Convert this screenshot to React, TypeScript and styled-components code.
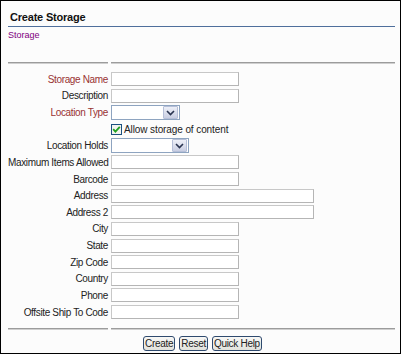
import React from 'react';
import styled, { createGlobalStyle } from 'styled-components';

const GlobalStyle = createGlobalStyle`
  html, body {
    margin: 0;
    padding: 0;
    background: #ffffff;
  }
`;

interface Field {
  label: string;
  kind: 'text' | 'wide' | 'select' | 'check';
  required?: boolean;
  selectWidth?: number;
}

const fields: Field[] = [
  { label: 'Storage Name', kind: 'text', required: true },
  { label: 'Description', kind: 'text' },
  { label: 'Location Type', kind: 'select', required: true, selectWidth: 69 },
  { label: '', kind: 'check' },
  { label: 'Location Holds', kind: 'select', selectWidth: 78 },
  { label: 'Maximum Items Allowed', kind: 'text' },
  { label: 'Barcode', kind: 'text' },
  { label: 'Address', kind: 'wide' },
  { label: 'Address 2', kind: 'wide' },
  { label: 'City', kind: 'text' },
  { label: 'State', kind: 'text' },
  { label: 'Zip Code', kind: 'text' },
  { label: 'Country', kind: 'text' },
  { label: 'Phone', kind: 'text' },
  { label: 'Offsite Ship To Code', kind: 'text' },
];

const App: React.FC = () => {
  return (
    <>
      <GlobalStyle />
      <Frame>
        <Title>Create Storage</Title>
        <Crumb>Storage</Crumb>
        <Separator $top={21}>
          <SepLine />
          <SepLine />
        </Separator>
        <Form>
          {fields.map((f, i) => (
            <React.Fragment key={i}>
              <Label $required={f.required}>{f.label}</Label>
              <Cell>
                {f.kind === 'text' && <TextInput $wide={false} />}
                {f.kind === 'wide' && <TextInput $wide />}
                {f.kind === 'select' && (
                  <Select $width={f.selectWidth || 69}>
                    <SelectButton>
                      <svg width="9" height="6" viewBox="0 0 9 6">
                        <path d="M1 1 L4.5 4.5 L8 1" fill="none" stroke="#2a3450" strokeWidth="1.6" />
                      </svg>
                    </SelectButton>
                  </Select>
                )}
                {f.kind === 'check' && (
                  <CheckRow>
                    <CheckBox>
                      <svg width="9" height="9" viewBox="0 0 9 9">
                        <path d="M1.2 4.2 L3.4 6.6 L7.8 1.8" fill="none" stroke="#21a121" strokeWidth="1.8" />
                      </svg>
                    </CheckBox>
                    <CheckText>Allow storage of content</CheckText>
                  </CheckRow>
                )}
              </Cell>
            </React.Fragment>
          ))}
        </Form>
        <Separator $top={8}>
          <SepLine />
          <SepLine />
        </Separator>
        <Buttons>
          <Button>Create</Button>
          <Button>Reset</Button>
          <Button>Quick Help</Button>
        </Buttons>
      </Frame>
    </>
  );
};

export default App;

const Frame = styled.div`
  width: 401px;
  height: 354px;
  box-sizing: border-box;
  border: 1px solid #000;
  background: #fcfcfc;
  padding: 9px 5px 0 7px;
  font-family: 'Liberation Sans', Arial, sans-serif;
  display: flex;
  flex-direction: column;
`;

const Title = styled.div`
  font-size: 11px;
  font-weight: bold;
  color: #111;
  padding: 0 0 2px 2px;
  height: 14px;
  line-height: 14px;
  letter-spacing: -0.2px;
  border-bottom: 1px solid #4f6f9c;
`;

const Crumb = styled.div`
  font-size: 9px;
  color: #800080;
  margin-top: 3px;
  height: 11px;
  line-height: 11px;
`;

const Separator = styled.div<{ $top: number }>`
  display: grid;
  grid-template-columns: 100px 1fr;
  gap: 3px;
  margin-top: ${(p) => p.$top}px;
`;

const SepLine = styled.div`
  height: 1px;
  border-top: 1px solid #9c9c9c;
  background: #cfcfcf;
`;

const Form = styled.div`
  display: grid;
  grid-template-columns: 100px 1fr;
  grid-auto-rows: 16.64px;
  column-gap: 3px;
  align-items: center;
  margin-top: 7px;
`;

const Label = styled.div<{ $required?: boolean }>`
  font-size: 10px;
  text-align: right;
  white-space: nowrap;
  color: ${(p) => (p.$required ? '#993333' : '#222')};
  letter-spacing: -0.35px;
`;

const Cell = styled.div`
  display: flex;
  align-items: center;
`;

const TextInput = styled.div<{ $wide: boolean }>`
  width: ${(p) => (p.$wide ? '203px' : '128px')};
  height: 14px;
  box-sizing: border-box;
  background: #fff;
  border: 1px solid #b5b5b5;
  border-top-color: #c8c8c8;
  border-left-color: #c8c8c8;
`;

const Select = styled.div<{ $width: number }>`
  width: ${(p) => p.$width}px;
  height: 15px;
  box-sizing: border-box;
  background: #fff;
  border: 1px solid #8ea4c0;
  display: flex;
  justify-content: flex-end;
  padding: 1px;
`;

const SelectButton = styled.div`
  width: 13px;
  height: 11px;
  background: linear-gradient(#eef0f8, #c9cee2);
  border: 1px solid #b6bfd8;
  border-radius: 1px;
  display: flex;
  align-items: center;
  justify-content: center;
  margin-top: -1px;
`;

const CheckRow = styled.div`
  display: flex;
  align-items: center;
  gap: 2px;
`;

const CheckBox = styled.div`
  width: 11px;
  height: 11px;
  box-sizing: border-box;
  border: 1px solid #1c5180;
  background: #f4f4f0;
  display: flex;
  align-items: center;
  justify-content: center;
`;

const CheckText = styled.span`
  font-size: 10px;
  color: #222;
  letter-spacing: -0.1px;
`;

const Buttons = styled.div`
  display: flex;
  justify-content: center;
  gap: 4px;
  margin-top: 6px;
  padding-left: 2px;
`;

const Button = styled.div`
  height: 15px;
  box-sizing: border-box;
  padding: 0 1px;
  font-size: 10px;
  line-height: 13px;
  letter-spacing: -0.3px;
  color: #222;
  background: linear-gradient(#f8f8f6, #e2e2dc);
  border: 1px solid #2f4a6e;
  border-radius: 3px;
`;
